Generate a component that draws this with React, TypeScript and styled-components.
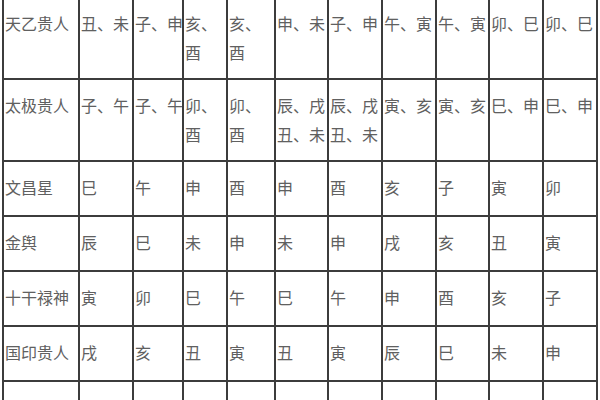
import styled, { createGlobalStyle } from 'styled-components';

const GlobalStyle = createGlobalStyle`
  html, body {
    margin: 0;
    padding: 0;
    background: #ffffff;
  }
  body {
    width: 600px;
    height: 400px;
    overflow: hidden;
    font-family: 'Noto Sans CJK SC', 'Noto Sans', sans-serif;
  }
`;

const Page = styled.div`
  width: 600px;
  height: 400px;
  overflow: hidden;
  padding-left: 2px;
  box-sizing: border-box;
`;

const Table = styled.table`
  margin-top: -4px;
  width: 596px;
  table-layout: fixed;
  border-collapse: collapse;
  color: #606060;
  font-size: 16px;
`;

const Row = styled.tr<{ $tall?: boolean }>`
  height: ${(p) => (p.$tall ? '82px' : '55px')};
`;

const Cell = styled.td`
  border: 2px solid #3c3c3c;
  padding: 11px 0 0 1px;
  vertical-align: top;
  line-height: 29px;
  white-space: pre;
  overflow: hidden;
`;

const widths = [76, 54, 50, 44, 48, 53, 54, 54, 53, 54, 54];

const rows: { name: string; values: string[]; tall?: boolean }[] = [
  {
    name: '天乙贵人',
    values: ['丑、未', '子、申', '亥、\n酉', '亥、\n酉', '申、未', '子、申', '午、寅', '午、寅', '卯、巳', '卯、巳'],
    tall: true,
  },
  {
    name: '太极贵人',
    values: ['子、午', '子、午', '卯、\n酉', '卯、\n酉', '辰、戌\n丑、未', '辰、戌\n丑、未', '寅、亥', '寅、亥', '巳、申', '巳、申'],
    tall: true,
  },
  { name: '文昌星', values: ['巳', '午', '申', '酉', '申', '酉', '亥', '子', '寅', '卯'] },
  { name: '金舆', values: ['辰', '巳', '未', '申', '未', '申', '戌', '亥', '丑', '寅'] },
  { name: '十干禄神', values: ['寅', '卯', '巳', '午', '巳', '午', '申', '酉', '亥', '子'] },
  { name: '国印贵人', values: ['戌', '亥', '丑', '寅', '丑', '寅', '辰', '巳', '未', '申'] },
  { name: '羊刃', values: ['卯', '辰', '午', '未', '午', '未', '酉', '戌', '子', '丑'] },
];

export default function App() {
  return (
    <Page>
      <GlobalStyle />
      <Table>
        <colgroup>
          {widths.map((w, i) => (
            <col key={i} style={{ width: w }} />
          ))}
        </colgroup>
        <tbody>
          {rows.map((r) => (
            <Row key={r.name} $tall={r.tall}>
              <Cell>{r.name}</Cell>
              {r.values.map((v, i) => (
                <Cell key={i}>{v}</Cell>
              ))}
            </Row>
          ))}
        </tbody>
      </Table>
    </Page>
  );
}
